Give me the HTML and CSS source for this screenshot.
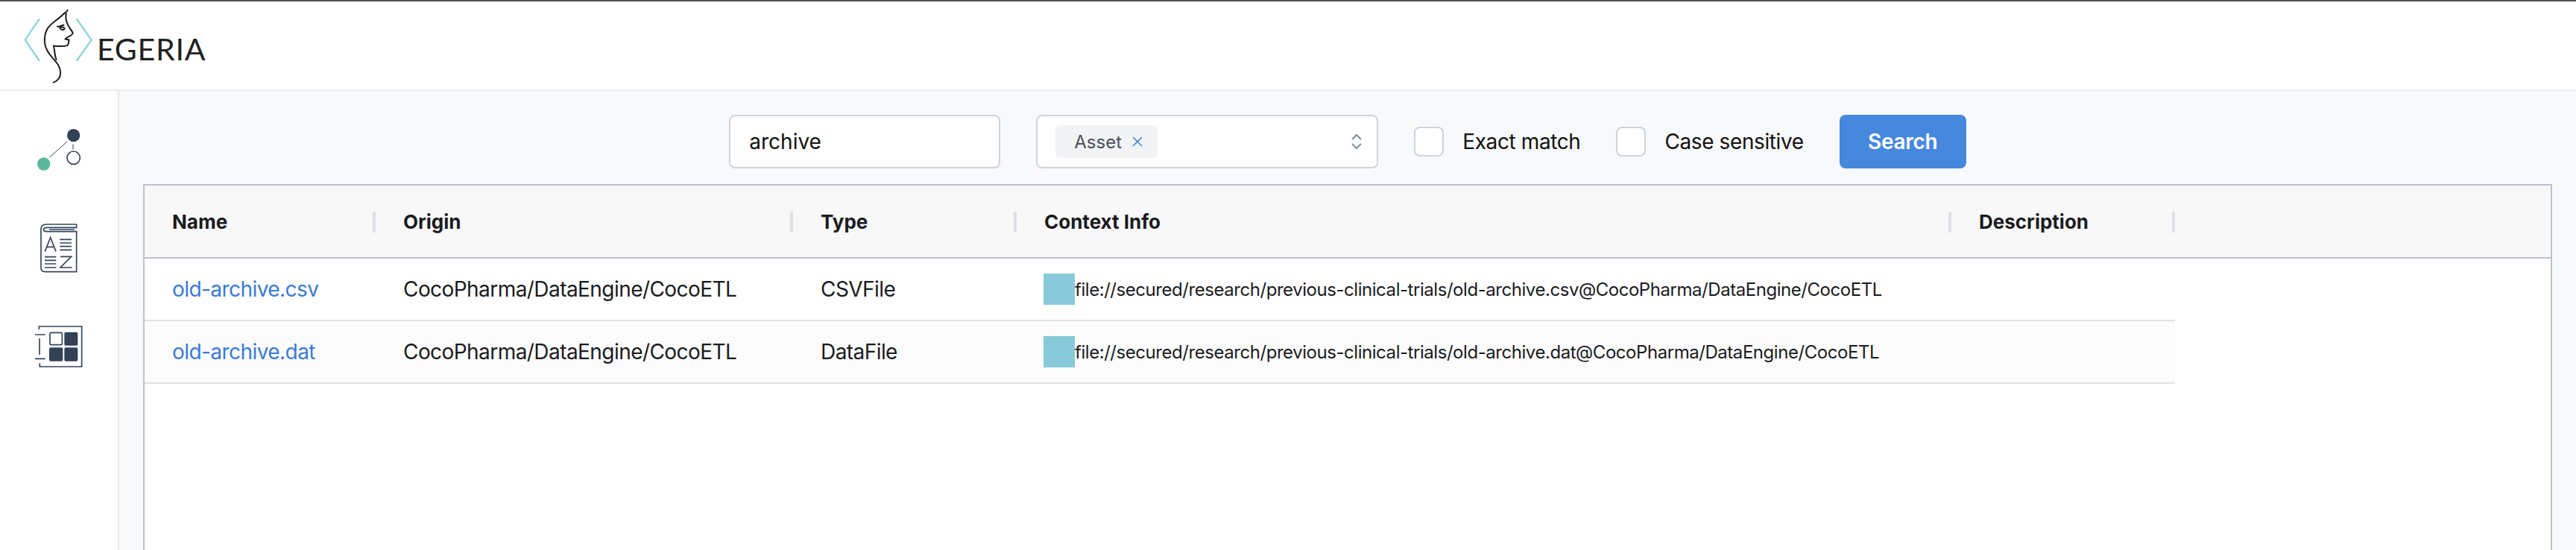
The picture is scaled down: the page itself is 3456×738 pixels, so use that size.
FILE: index.html
```html
<!DOCTYPE html>
<html lang="en">
<head>
  <meta charset="UTF-8" />
  <title>Egeria</title>
  <link rel="stylesheet" href="styles.css">
</head>
<body>
  <header class="topbar">
    <svg class="logo" viewBox="90 30 290 310">
      <path class="chevron" d="M158 73 L100 158 L158 243 M308 73 L368 158 L308 243" />
      <path class="face" d="M272 38 C268 46 258 50 248 60 C232 76 206 90 192 110 C180 128 178 150 179 168 C181 192 194 212 212 232 C228 250 244 268 243 292 C242 310 232 324 215 330" />
      <path class="face" d="M266 52 C262 66 266 82 272 96 C278 108 288 120 293 130 C290 140 278 144 270 148 L262 155 L278 158 C274 164 278 172 272 180 C256 185 232 184 215 182 C220 198 218 216 226 238" />
      <path class="face" d="M230 104 C238 106 246 100 256 98 M240 110 C246 104 258 106 259 112 C258 120 246 120 240 110" />
    </svg>
    <span class="brand">EGERIA</span>
  </header>

  <div class="page">
    <nav class="sidebar">
      <svg class="nav-icon" viewBox="138 114 198 198">
        <line class="thin" x1="200" y1="243" x2="270" y2="180" />
        <line class="thin" x1="294" y1="190" x2="294" y2="212" />
        <circle class="dark" cx="296" cy="155" r="26" />
        <circle class="green" cx="176" cy="270" r="26" />
        <circle class="ring" cx="296" cy="245" r="26" />
      </svg>
      <svg class="nav-icon" viewBox="138 510 198 198">
        <path class="line" d="M308 513 H186 C172 513 165 522 165 534 V688 C165 698 172 704 182 704 H308 V542 H186 C172 542 172 526 186 526 H308 V513" />
        <path class="line" d="M198 534 H300" />
        <path class="line" d="M181 622 L203 566 L225 622 M188 604 H218" />
        <path class="line" d="M241 574 H288 M241 588 H288 M241 602 H288 M241 616 H288" />
        <path class="line" d="M180 644 H226 M180 658 H226 M180 672 H226 M180 687 H226" />
        <path class="line" d="M243 643 H287 L243 687 H290" />
      </svg>
      <svg class="nav-icon" viewBox="138 906 198 198">
        <path class="line" d="M157 936 V924 H329 V1086 H160 V1072" />
        <path class="line" d="M141 957 H182 M141 1054 H182 M159 972 V1038" />
        <rect class="line" x="201" y="949" width="49" height="49" rx="4" />
        <rect class="dark" x="259" y="947" width="54" height="54" rx="6" />
        <rect class="dark" x="198" y="1009" width="55" height="55" rx="6" />
        <rect class="dark" x="259" y="1009" width="54" height="55" rx="6" />
      </svg>
    </nav>

    <main class="content">
      <div class="toolbar">
        <div class="field search-box">archive</div>
        <div class="field type-select">
          <span class="tag">Asset
            <svg class="tag-x" viewBox="0 0 14 14"><path d="M1 1 L13 13 M13 1 L1 13" /></svg>
          </span>
          <svg class="updown" viewBox="0 0 14 22"><path d="M1 8 L7 2 L13 8 M1 14 L7 20 L13 14" /></svg>
        </div>
        <label class="check"><span class="box"></span>Exact match</label>
        <label class="check"><span class="box"></span>Case sensitive</label>
        <button class="search-btn">Search</button>
      </div>

      <div class="results">
        <div class="row head">
          <div class="cell">Name</div>
          <div class="cell">Origin</div>
          <div class="cell">Type</div>
          <div class="cell">Context Info</div>
          <div class="cell">Description</div>
        </div>
        <div class="row">
          <div class="cell"><a href="#">old-archive.csv</a></div>
          <div class="cell">CocoPharma/DataEngine/CocoETL</div>
          <div class="cell">CSVFile</div>
          <div class="cell info"><span class="swatch"></span>file://secured/research/previous-clinical-trials/old-archive.csv@CocoPharma/DataEngine/CocoETL</div>
          <div class="cell"></div>
        </div>
        <div class="row alt">
          <div class="cell"><a href="#">old-archive.dat</a></div>
          <div class="cell">CocoPharma/DataEngine/CocoETL</div>
          <div class="cell">DataFile</div>
          <div class="cell info"><span class="swatch"></span>file://secured/research/previous-clinical-trials/old-archive.dat@CocoPharma/DataEngine/CocoETL</div>
          <div class="cell"></div>
        </div>
      </div>
    </main>
  </div>
</body>
</html>
```

FILE: styles.css
```css
html, body {
  margin: 0;
  height: 100%;
}
body {
  font-family: Inter, 'Liberation Sans', sans-serif;
  color: #1a1b1e;
  background: #fff;
  display: flex;
  flex-direction: column;
  height: 738px;
  overflow: hidden;
}
.topbar {
  display: flex;
  align-items: center;
  height: 118px;
  flex: none;
  border-top: 2px solid #555;
  border-bottom: 2px solid #e9ecef;
  padding-left: 30px;
}
.logo {
  width: 97px;
  height: 103px;
  margin-top: 2px;
}
.chevron {
  fill: none;
  stroke: #8fd3df;
  stroke-width: 7;
}
.face {
  fill: none;
  stroke: #1c1c1c;
  stroke-width: 6;
  stroke-linecap: round;
  stroke-linejoin: round;
}
.brand {
  font-family: Lato, sans-serif;
  font-size: 41px;
  letter-spacing: 0.8px;
  color: #222;
  margin-left: 3px;
  margin-top: 8px;
}
.page {
  display: flex;
  flex: 1;
  min-height: 0;
}
.sidebar {
  width: 158px;
  flex: none;
  border-right: 2px solid #e9ecef;
  display: flex;
  flex-direction: column;
  align-items: center;
  gap: 66px;
  padding-top: 46px;
}
.nav-icon {
  width: 66px;
  height: 66px;
}
.nav-icon .line, .nav-icon .ring {
  fill: none;
  stroke: #34445a;
  stroke-width: 5;
}
.nav-icon .thin {
  stroke: #34445a;
  stroke-width: 3;
}
.nav-icon .dark {
  fill: #324156;
}
.nav-icon .green {
  fill: #5bb99b;
}
.content {
  flex: 1;
  min-width: 0;
  background: #f8f9fa;
  padding: 32px 32px 0;
  display: flex;
  flex-direction: column;
}
.toolbar {
  display: flex;
  align-items: center;
  justify-content: center;
  gap: 48px;
  height: 72px;
  margin-bottom: 21px;
  font-size: 28px;
}
.field {
  height: 72px;
  box-sizing: border-box;
  background: #fff;
  border: 2px solid #ced4da;
  border-radius: 8px;
  display: flex;
  align-items: center;
}
.search-box {
  width: 364px;
  padding-left: 25px;
  color: #111;
}
.type-select {
  width: 459px;
  padding: 0 20px 0 24px;
  justify-content: space-between;
}
.tag {
  display: flex;
  align-items: center;
  height: 44px;
  width: 137px;
  box-sizing: border-box;
  padding-left: 25px;
  background: #f1f3f5;
  border-radius: 6px;
  color: #495057;
  font-size: 24px;
}
.tag-x {
  width: 14px;
  height: 14px;
  margin-left: 14px;
  fill: none;
  stroke: #4a8ae0;
  stroke-width: 1.6;
}
.updown {
  width: 14px;
  height: 22px;
  fill: none;
  stroke: #868e96;
  stroke-width: 2;
}
.check {
  display: flex;
  align-items: center;
  gap: 25px;
  color: #111;
  letter-spacing: -0.4px;
}
.box {
  width: 40px;
  height: 40px;
  box-sizing: border-box;
  background: #fff;
  border: 2px solid #ced4da;
  border-radius: 8px;
}
.search-btn {
  width: 170px;
  height: 72px;
  border: none;
  border-radius: 8px;
  background: #4688de;
  color: white;
  font-family: inherit;
  font-size: 28px;
  font-weight: 600;
  letter-spacing: -0.3px;
}
.results {
  flex: 1;
  background: #fff;
  border: 2px solid #bcc1c9;
  border-bottom: none;
}
.row {
  display: grid;
  grid-template-columns: 310px 560px 300px 1254px 300px;
  width: 2724px;
  height: 84px;
  box-sizing: border-box;
  border-bottom: 2px solid #dee2e6;
  font-size: 28px;
  letter-spacing: -0.02em;
}
.row.alt {
  background: #fcfcfc;
}
.row.head {
  width: auto;
  height: 98px;
  background: #f8f8f8;
  border-bottom: 2px solid #bcc1c9;
  font-weight: 700;
  font-size: 26px;
  letter-spacing: 0;
}
.cell {
  display: flex;
  align-items: center;
  padding-left: 37px;
  white-space: nowrap;
  position: relative;
}
.head .cell::after {
  content: "";
  position: absolute;
  right: 0;
  top: 35px;
  width: 4px;
  height: 28px;
  background: #dee2e6;
}
.info {
  font-size: 24px;
  padding-left: 36px;
  letter-spacing: -0.45px;
}
.swatch {
  width: 42px;
  height: 42px;
  flex: none;
  background: #88cada;
}
.cell a {
  color: #3a7bd5;
  text-decoration: none;
}
```
